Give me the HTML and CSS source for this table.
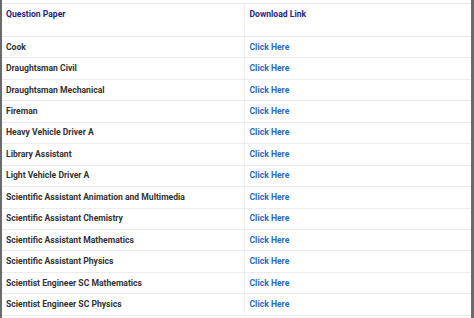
FILE: index.html
```html
<!DOCTYPE html>
<html>
<head>
<meta charset="utf-8">
<link rel="stylesheet" href="styles.css">
</head>
<body>
<div class="frame">
  <table class="papers">
    <thead>
      <tr>
        <th class="col-name">Question Paper</th>
        <th class="col-link">Download Link</th>
      </tr>
    </thead>
    <tbody>
      <tr><td>Cook</td><td><a href="#">Click Here</a></td></tr>
      <tr><td>Draughtsman Civil</td><td><a href="#">Click Here</a></td></tr>
      <tr><td>Draughtsman Mechanical</td><td><a href="#">Click Here</a></td></tr>
      <tr><td>Fireman</td><td><a href="#">Click Here</a></td></tr>
      <tr><td>Heavy Vehicle Driver A</td><td><a href="#">Click Here</a></td></tr>
      <tr><td>Library Assistant</td><td><a href="#">Click Here</a></td></tr>
      <tr><td>Light Vehicle Driver A</td><td><a href="#">Click Here</a></td></tr>
      <tr><td>Scientific Assistant Animation and Multimedia</td><td><a href="#">Click Here</a></td></tr>
      <tr><td>Scientific Assistant Chemistry</td><td><a href="#">Click Here</a></td></tr>
      <tr><td>Scientific Assistant Mathematics</td><td><a href="#">Click Here</a></td></tr>
      <tr><td>Scientific Assistant Physics</td><td><a href="#">Click Here</a></td></tr>
      <tr><td>Scientist Engineer SC Mathematics</td><td><a href="#">Click Here</a></td></tr>
      <tr><td>Scientist Engineer SC Physics</td><td><a href="#">Click Here</a></td></tr>
    </tbody>
  </table>
</div>
</body>
</html>
```
FILE: styles.css
```css
html, body {
  margin: 0;
  padding: 0;
  background: #ffffff;
}
body {
  font-family: Roboto, "Liberation Sans", Arial, sans-serif;
  font-size: 8.6px;
  font-weight: 700;
  color: #333333;
}
.frame {
  height: 318px;
  box-sizing: border-box;
  border-left: 2px solid #6b6b6b;
  border-right: 3px solid #6b6b6b;
  padding-top: 3px;
  overflow: hidden;
}
.papers {
  width: 100%;
  border-collapse: collapse;
  table-layout: fixed;
}
.papers th,
.papers td {
  text-align: left;
  vertical-align: middle;
  border-top: 1px solid #ececec;
  border-bottom: 1px solid #ececec;
  padding: 0 5px;
  height: 20.45px;
  line-height: 11px;
}
.papers th {
  color: #1f1f82;
  height: 33px;
  vertical-align: top;
  padding-top: 5px;
  box-sizing: border-box;
}
.papers th:first-child,
.papers td:first-child {
  padding-left: 4px;
  border-right: 1px solid #f0f0f0;
}
.col-name {
  width: 242px;
}
.papers a {
  color: #2a6cbf;
  text-decoration: none;
}
```
